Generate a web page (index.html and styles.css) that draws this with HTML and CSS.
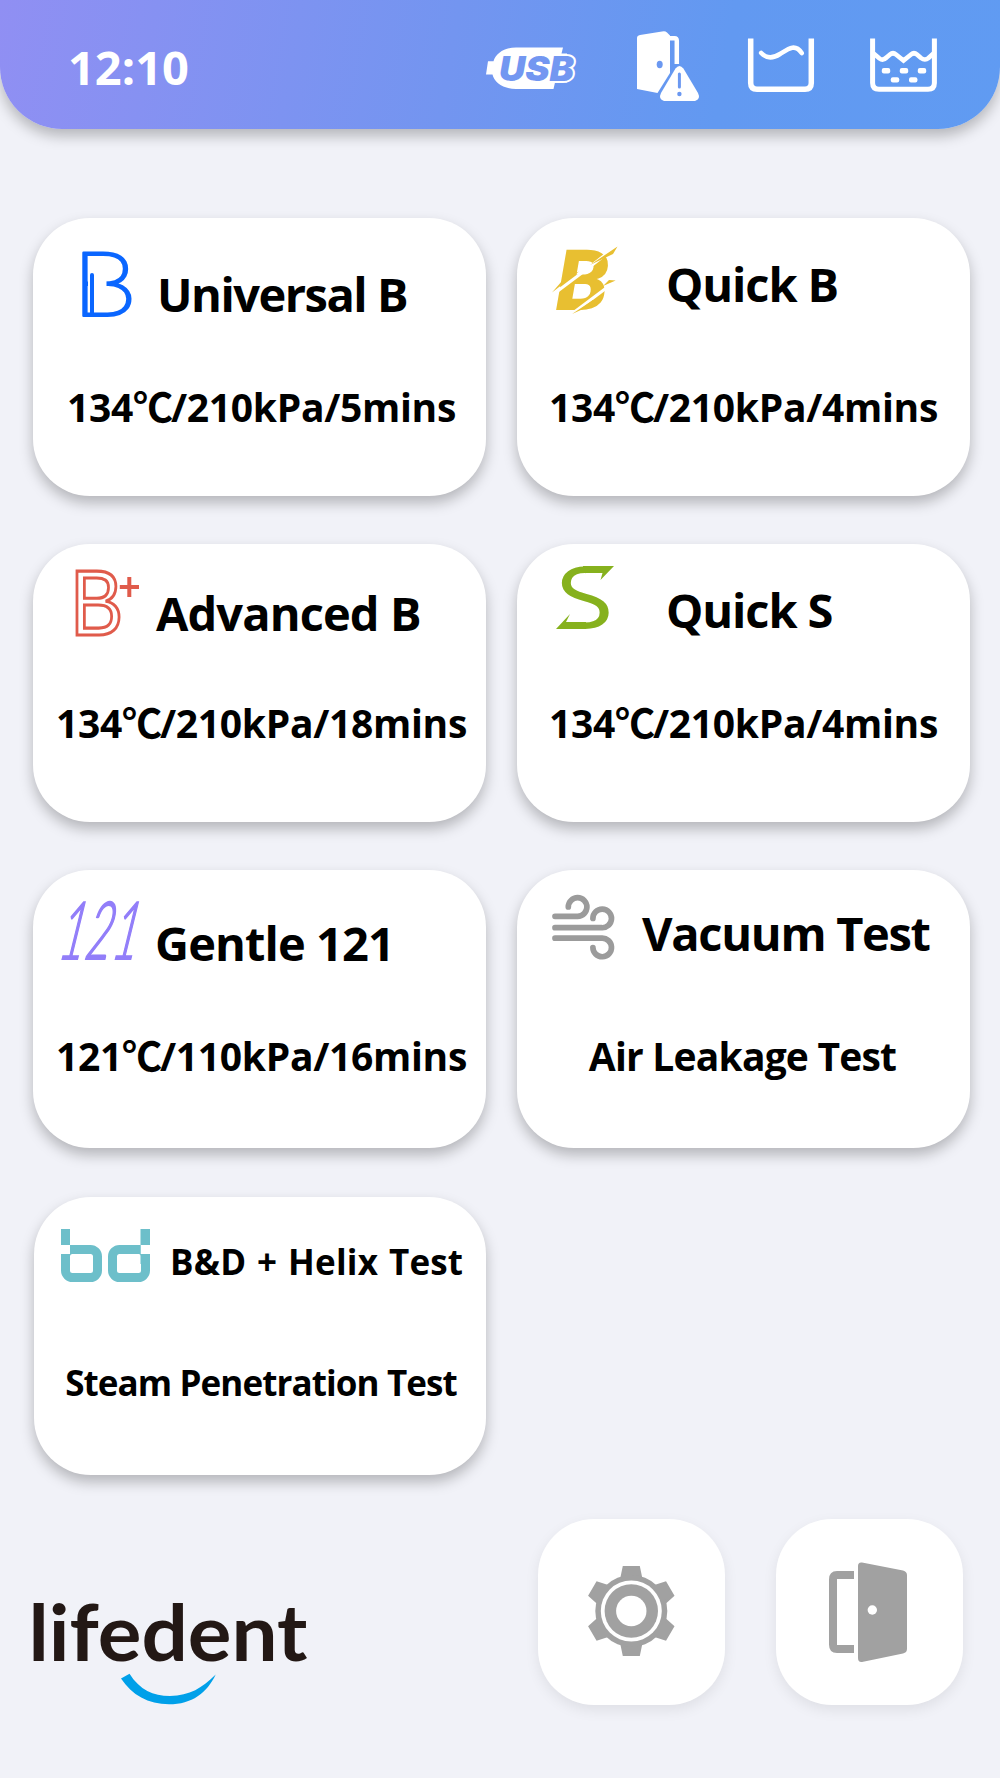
FILE: index.html
```html
<!DOCTYPE html>
<html lang="en">
<head>
    <meta charset="UTF-8">
    <meta name="viewport" content="width=device-width, initial-scale=1.0">
    <title>Lifedent</title>
    <link rel="stylesheet" href="styles.css">
</head>
<body>
    <header class="topbar">
        <div class="clock">12:10</div>
        <div class="status">
            <svg class="usb" width="96" height="80" viewBox="484 25 96 80">
                <path fill="#fff" d="M516 47.5H563L561.500 53.500H567V82.500H555L553.500 89H516C503 89 494 82 492.500 74.500H486L488 61.300H493.500C496 53 505 47.500 516 47.500Z"/>
                <text class="usb-text" x="499" y="80.5" textLength="75" lengthAdjust="spacingAndGlyphs">USB</text>
            </svg>
            <svg class="door-alert" width="76" height="80" viewBox="630 25 76 80">
                <path fill="none" stroke="#fff" stroke-width="4.5" d="M668 38.300H674.500Q676.800 38.300 676.800 41V64"/>
                <path fill="#fff" d="M637 38Q637 35.500 640 35L662 31.500Q665 30.500 667 32.500L670 35.500V73L657.500 93L637 89Z"/>
                <ellipse cx="659.7" cy="64.5" rx="3" ry="3.7" fill="#6b98f1"/>
                <path fill="#fff" d="M675.500 68.500Q679.400 63.500 683.400 68.500L698 93Q701 99 695 101H664Q658 99 661 93Z"/>
                <path stroke="#6b98f1" stroke-width="3" stroke-linecap="round" d="M679.400 74V87"/>
                <circle cx="679.4" cy="94" r="2.2" fill="#6b98f1"/>
            </svg>
            <svg class="tank" width="72" height="80" viewBox="745 25 72 80">
                <g fill="none" stroke="#fff" stroke-width="5.5">
                    <path d="M750.700 38.500V83Q750.700 89.200 757 89.200H805Q811.300 89.200 811.300 83V38.500"/>
                    <path stroke-width="4.6" stroke-linecap="round" d="M761.200 53C767 59 773 58.500 780 54C788 49 795 43 801.700 53"/>
                </g>
            </svg>
            <svg class="tank" width="72" height="80" viewBox="867 25 72 80">
                <g fill="none" stroke="#fff" stroke-width="5">
                    <path d="M872.600 38.500V83Q872.600 89.200 879 89.200H928Q934.400 89.200 934.400 83V38.500"/>
                    <path stroke-width="4.6" d="M873 53L879.500 58.500Q883 61 886.500 57.500L890 54.500Q893 52 896 54.500L903.500 60.500L911 54.500Q914 52 917 54.500L921 58Q925 61 928.500 58L934 53"/>
                </g>
                <g fill="#fff">
                    <rect x="881.800" y="68" width="8.400" height="5.400" rx="2"/>
                    <rect x="899.800" y="68" width="8.400" height="5.400" rx="2"/>
                    <rect x="917.800" y="68" width="8.400" height="5.400" rx="2"/>
                    <rect x="890.800" y="77.200" width="8.400" height="5.400" rx="2"/>
                    <rect x="909" y="77.200" width="8.400" height="5.400" rx="2"/>
                </g>
            </svg>
        </div>
    </header>

    <main class="programs">
        <div class="card universal-b">
            <div class="card-head">
                <svg width="100" height="90" viewBox="20 15 100 90">
                    <text class="mark mark-ub" transform="translate(40.500 97.500) scale(1.160 1)">B</text>
                    <rect x="55" y="58" width="18.500" height="10" fill="#fff"/>
                    <path stroke="#0a66ff" stroke-width="4" stroke-linecap="round" d="M59 57V95"/>
                </svg>
                <h2>Universal B</h2>
            </div>
            <p>134<span class="deg">℃</span>/210kPa/5mins</p>
        </div>

        <div class="card quick-b">
            <div class="card-head">
                <svg width="100" height="90" viewBox="20 15 100 90">
                    <text class="mark mark-qb" transform="translate(39 91.700)">B</text>
                    <path stroke="#fff" stroke-width="3" d="M34 78L66 54M72 49.500L102 26M52 98L102 60.500"/>
                    <path fill="#e8bf31" d="M35 74.500L48.500 59L62 53.500ZM100.500 28.500L73 47L96 36ZM55 96L76 82L84 83ZM98.700 62.500L86 68L92 62Z"/>
                </svg>
                <h2>Quick B</h2>
            </div>
            <p>134<span class="deg">℃</span>/210kPa/4mins</p>
        </div>

        <div class="card advanced-b">
            <div class="card-head">
                <svg width="100" height="90" viewBox="20 15 100 90">
                    <text class="mark mark-ab" transform="translate(37.500 91) scale(0.860 1)">B</text>
                    <path stroke="#e05b4b" stroke-width="4" d="M86.800 43H106M96.300 33V53"/>
                </svg>
                <h2>Advanced B</h2>
            </div>
            <p>134<span class="deg">℃</span>/210kPa/18mins</p>
        </div>

        <div class="card quick-s">
            <div class="card-head">
                <svg width="100" height="90" viewBox="20 15 100 90">
                    <text class="mark mark-qs" transform="translate(39 84) scale(1.100 1)">S</text>
                    <rect x="69" y="29" width="30" height="17" fill="#fff"/>
                    <rect x="36" y="60" width="31" height="18" fill="#fff"/>
                    <path fill="#86b11d" d="M66 22H97L83.500 36L85.500 29H66ZM69 85H39L53 70L49 78H69Z"/>
                </svg>
                <h2>Quick S</h2>
            </div>
            <p>134<span class="deg">℃</span>/210kPa/4mins</p>
        </div>

        <div class="card gentle">
            <div class="card-head">
                <svg width="100" height="90" viewBox="20 15 100 90">
                    <text class="mark mark-121" transform="translate(24 88.500) skewX(-10)" textLength="80" lengthAdjust="spacingAndGlyphs">121</text>
                </svg>
                <h2>Gentle 121</h2>
            </div>
            <p>121<span class="deg">℃</span>/110kPa/16mins</p>
        </div>

        <div class="card vacuum">
            <div class="card-head">
                <svg width="100" height="90" viewBox="20 15 100 90">
                    <g fill="none" stroke="#9b9b9b" stroke-width="5.700" stroke-linecap="round">
                        <path d="M38 46.300H60.500A9.300 9.300 0 1 0 51.300 37"/>
                        <path d="M38 57.700H84.500A9.300 9.300 0 1 0 75.900 48.500"/>
                        <path d="M38 68.200H84.500A9.300 9.300 0 1 1 75.900 77.500"/>
                    </g>
                </svg>
                <h2>Vacuum Test</h2>
            </div>
            <p>Air Leakage Test</p>
        </div>

        <div class="card bd-test">
            <div class="card-head">
                <svg width="100" height="90" viewBox="20 15 100 90">
                    <g fill="none" stroke="#6dbfca" stroke-width="9">
                        <rect x="32.500" y="52.500" width="32" height="28" rx="7"/>
                        <rect x="79.500" y="52.500" width="33" height="28" rx="7"/>
                    </g>
                    <path fill="#fff" d="M27 47h10v10h-10zM107.500 47h10v10h-10z"/>
                    <path fill="#6dbfca" d="M28 32h9v16h-9zM107.500 32h9.500v16h-9.500zM28 57h9v10h-9zM107.500 57h9.500v10h-9.500zM37 48h9v9h-9zM98.500 48h9v9h-9z"/>
                </svg>
                <h2>B&amp;D + Helix Test</h2>
            </div>
            <p>Steam Penetration Test</p>
        </div>
    </main>

    <footer>
        <svg class="logo" width="290" height="110" viewBox="25 1600 290 110">
            <text class="logo-text" x="28.500" y="1661" textLength="279" lengthAdjust="spacingAndGlyphs">lifedent</text>
            <path fill="#00a0e9" d="M121 1678.500L129.500 1673.700C140 1690 153 1696 170 1696C190 1695.500 202 1688 215.700 1674.500C207 1693 192 1704.300 169 1704.300C148 1704.300 132 1695 121 1678.500Z"/>
        </svg>
        <button class="tool" aria-label="Settings">
            <svg width="187" height="186" viewBox="538 1519 187 186">
                <g transform="translate(631.300 1611)" fill="#a1a1a1">
                    <path d="M-8.500 -45H8.500L11 -33H-11ZM-8.500 45H8.500L11 33H-11Z"/>
                    <path transform="rotate(60)" d="M-8.500 -45H8.500L11 -33H-11ZM-8.500 45H8.500L11 33H-11Z"/>
                    <path transform="rotate(120)" d="M-8.500 -45H8.500L11 -33H-11ZM-8.500 45H8.500L11 33H-11Z"/>
                    <circle r="36"/>
                    <circle r="30.500" fill="#fff"/>
                    <circle r="26.700"/>
                    <circle r="15.200" fill="#fff"/>
                </g>
            </svg>
        </button>
        <button class="tool" aria-label="Door">
            <svg width="187" height="186" viewBox="776 1519 187 186">
                <path fill="none" stroke="#a1a1a1" stroke-width="8" d="M854 1575H837Q833 1575 833 1579.500V1644.500Q833 1649 837 1649H854"/>
                <path fill="#a1a1a1" d="M858 1566Q858 1562 862 1562.500L903 1570.500Q907 1571.500 907 1575V1649Q907 1652.500 903 1653.500L862 1662Q858 1662.500 858 1658Z"/>
                <circle cx="872.300" cy="1610" r="4.700" fill="#fff"/>
            </svg>
        </button>
    </footer>
</body>
</html>
```
FILE: styles.css
```css
* {
    box-sizing: border-box;
}

body {
    margin: 0;
    height: 1778px;
    font-family: "Open Sans", "Noto Sans", "Noto Sans CJK SC", sans-serif;
    font-weight: 700;
    color: #000;
    background-color: #f1f2f8;
    overflow: hidden;
}

svg {
    display: block;
    flex: none;
    overflow: visible;
}

/* Top bar */
.topbar {
    display: flex;
    justify-content: space-between;
    height: 129px;
    padding: 25px 61px 0 68px;
    border-radius: 0 0 62px 62px;
    background: linear-gradient(100deg, #908ff3 0%, #7395f0 45%, #6299f1 72%, #609bf2 100%);
    box-shadow: 0 7px 14px rgba(0, 0, 0, 0.25);
}

.clock {
    padding-top: 12px;
    font-size: 47px;
    line-height: 60px;
    color: white;
}

.status {
    display: flex;
}

.door-alert {
    margin-left: 50px;
}

.door-alert + .tank {
    margin-left: 39px;
}

.tank + .tank {
    margin-left: 50px;
}

.usb-text {
    font-family: "Inter", sans-serif;
    font-size: 34px;
    font-weight: 900;
    font-style: italic;
    fill: #7397f1;
    stroke: white;
    stroke-width: 4px;
    paint-order: stroke;
}

/* Program cards */
.programs {
    display: grid;
    grid-template-columns: 453px 453px;
    grid-auto-rows: 278px;
    gap: 48px 31px;
    padding: 89px 0 0 33px;
}

.card {
    border-radius: 57px;
    background-color: white;
    box-shadow: 0 7px 14px rgba(0, 0, 0, 0.25);
}

.card-head {
    display: flex;
    height: 120px;
    padding: 15px 0 0 20px;
}

.card h2 {
    margin: 0;
    font-size: 47px;
    line-height: 60px;
    letter-spacing: -1.1px;
    white-space: nowrap;
}

.card p {
    margin: 0;
    font-size: 39px;
    line-height: 60px;
    letter-spacing: -0.3px;
    text-align: center;
    white-space: nowrap;
}

.deg {
    font-family: "Noto Sans CJK SC", sans-serif;
    font-size: 40px;
    line-height: 1;
    letter-spacing: -2px;
}

.universal-b h2 { padding: 31px 0 0 4px; letter-spacing: -1.5px; }
.quick-b h2, .quick-s h2 { padding: 21px 0 0 29px; }
.advanced-b h2 { padding: 24px 0 0 3px; letter-spacing: -0.9px; }
.gentle h2 { padding: 28px 0 0 2px; letter-spacing: -0.9px; }
.vacuum h2 { padding: 18px 0 0 5px; letter-spacing: -1.3px; }

.universal-b p, .quick-b p { padding-top: 39px; }
.advanced-b p, .quick-s p { padding-top: 29px; }
.gentle p, .vacuum p { padding-top: 36px; }
.vacuum p { padding-right: 2px; letter-spacing: -0.8px; }

.universal-b p, .advanced-b p, .gentle p { padding-left: 4px; }

.bd-test {
    height: 278px;
    margin: 1px 0 0 1px;
}

.bd-test .card-head {
    padding-left: 19px;
}

.bd-test h2 {
    padding: 20px 0 0 17px;
    font-size: 35px;
    letter-spacing: 0.2px;
    word-spacing: 1.5px;
}

.bd-test p {
    padding: 36px 0 0 2px;
    font-size: 35px;
    letter-spacing: -0.9px;
}

/* Program marks */
.mark-ub {
    font-family: Roboto, sans-serif;
    font-size: 89px;
    font-weight: 100;
    fill: #0a66ff;
    stroke: #0a66ff;
    stroke-width: 2.2px;
    stroke-linejoin: round;
}

.mark-qb {
    font-family: Roboto, sans-serif;
    font-size: 85px;
    font-weight: 900;
    font-style: italic;
    fill: #e8bf31;
}

.mark-ab {
    font-family: "Liberation Sans", sans-serif;
    font-size: 92px;
    font-weight: 400;
    fill: none;
    stroke: #e05b4b;
    stroke-width: 3.2px;
}

.mark-qs {
    font-family: Roboto, sans-serif;
    font-size: 86px;
    font-weight: 400;
    fill: #86b11d;
}

.mark-121 {
    font-family: Lato, sans-serif;
    font-size: 80px;
    font-weight: 300;
    font-style: italic;
    fill: #927ef9;
    stroke: #927ef9;
    stroke-width: 2px;
}

/* Footer */
footer {
    display: flex;
    padding: 45px 0 0 25px;
}

.logo {
    margin: 81px 223px 0 0;
}

.logo-text {
    font-family: Lato, sans-serif;
    font-size: 79px;
    font-weight: 700;
    fill: #231815;
}

.tool {
    width: 187px;
    height: 186px;
    margin-right: 51px;
    padding: 0;
    border: none;
    border-radius: 56px;
    background-color: white;
    box-shadow: 0 5px 14px rgba(0, 0, 0, 0.08);
    cursor: pointer;
    flex: none;
}
```
